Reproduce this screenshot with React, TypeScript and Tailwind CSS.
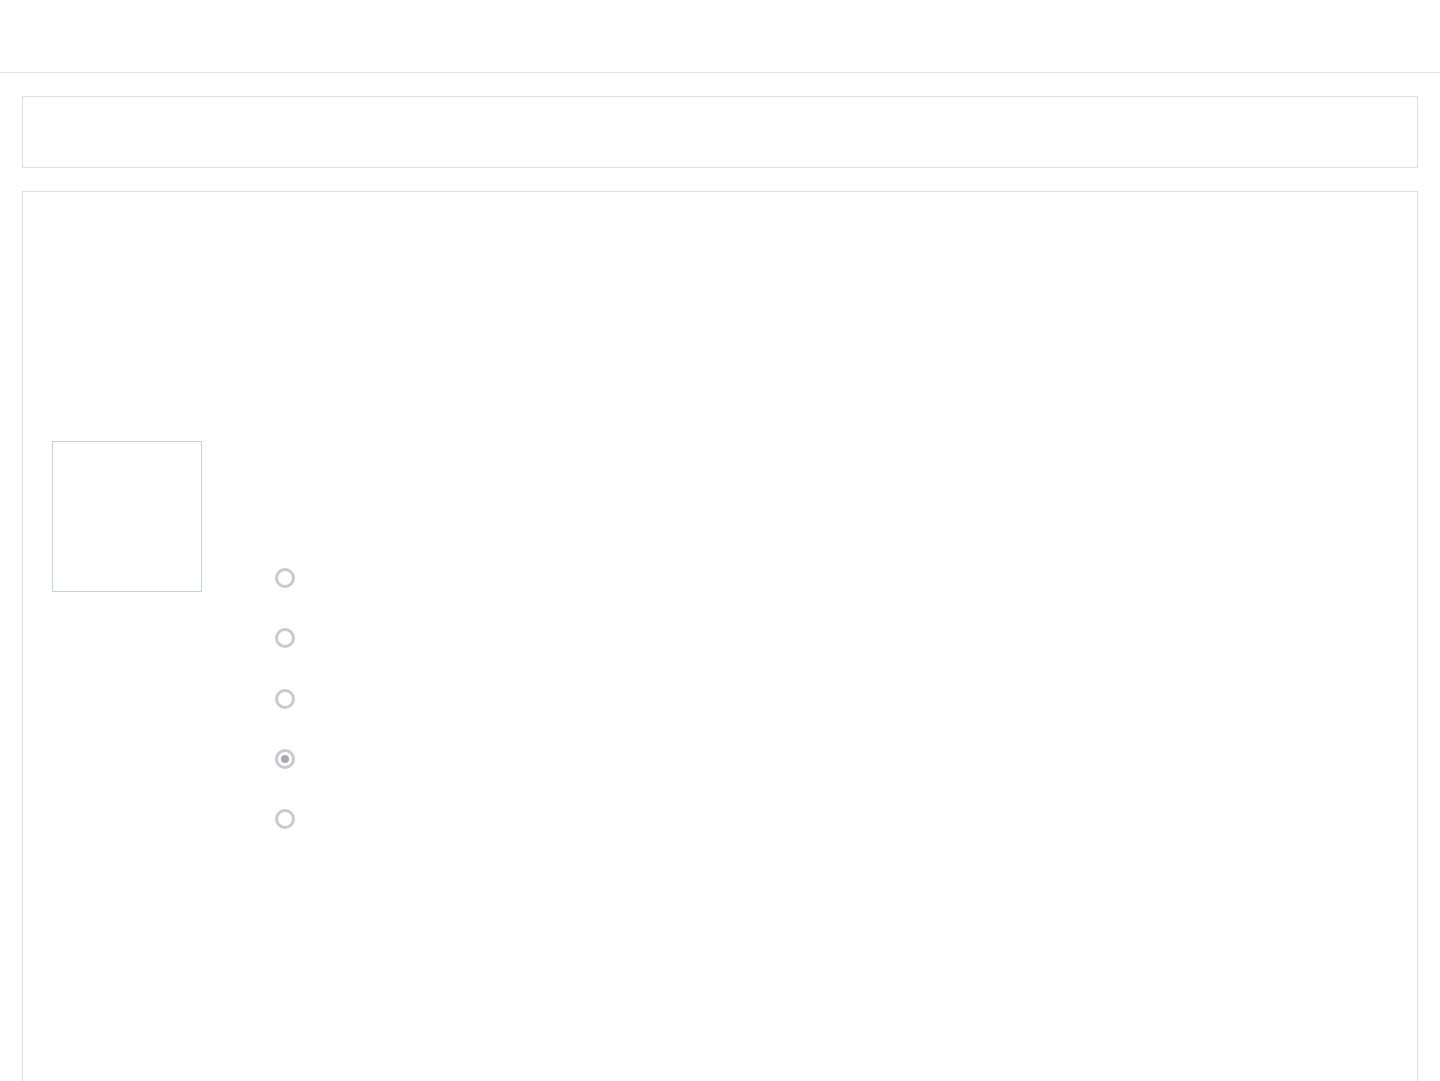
import React from "react";

function Radio({ checked = false }: { checked?: boolean }) {
  return (
    <div className="w-5 h-5 rounded-full border-[3px] border-[#cacace] bg-white flex items-center justify-center">
      {checked && <div className="w-[8px] h-[8px] rounded-full bg-[#a9a9b4]" />}
    </div>
  );
}

export default function App() {
  return (
    <div className="min-h-screen bg-white font-['Liberation_Sans',sans-serif]">
      <header className="h-[73px] border-b border-[#e4e4e4]" />
      <main className="px-[22px] pt-[23px]">
        <section className="h-[72px] border border-[#dedede]" />
        <section className="mt-[23px] h-[1000px] border border-[#dedede] pl-[29px] pt-[249px]">
          <div className="flex items-start">
            <div className="w-[150px] h-[151px] border border-[#cbd0d5]" />
            <div className="ml-[73px] mt-[127px] flex flex-col gap-[40.25px]">
              <Radio />
              <Radio />
              <Radio />
              <Radio checked />
              <Radio />
            </div>
          </div>
        </section>
      </main>
    </div>
  );
}
